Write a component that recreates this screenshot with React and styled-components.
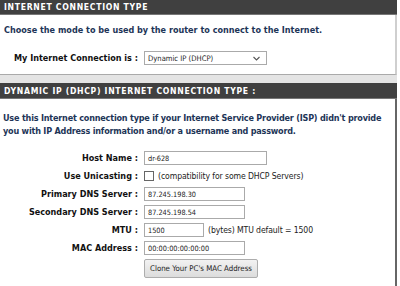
import styled, { createGlobalStyle } from "styled-components"

const Global = createGlobalStyle`
  body {
    margin: 0;
    background: #fff;
    font-family: "DejaVu Sans Condensed", "DejaVu Sans", Verdana, sans-serif;
  }
`

const Page = styled.div`
  width: 397px;
  display: flex;
  flex-direction: column;
`

const Header = styled.div`
  background: #404040;
  color: #fff;
  font-weight: bold;
  font-size: 8.6px;
  letter-spacing: 0.7px;
  height: ${p => p.h}px;
  display: flex;
  align-items: center;
  padding-left: 4px;
  border-bottom: 1px solid #777;
`

const Box = styled.div`
  background: #fff;
  border-right: 2px solid ${p => p.edge};
  border-bottom: 1px solid #aaa;
  padding: ${p => p.pad};
  display: flex;
  flex-direction: column;
`

const Gap = styled.div`
  height: 8px;
  background: #e4e4e4;
`

const Intro = styled.p`
  margin: 0;
  color: #1d3557;
  font-weight: bold;
  font-size: 9px;
  letter-spacing: ${p => p.track || 0}px;
  line-height: 13px;
  white-space: nowrap;
`

const Form = styled.div`
  display: grid;
  grid-template-columns: 134px 1fr;
  column-gap: 6px;
  row-gap: ${p => p.gap}px;
  align-items: center;
`

const Label = styled.div`
  text-align: right;
  font-weight: bold;
  font-size: 9px;
  color: #111;
  white-space: nowrap;
`

const Field = styled.div`
  display: flex;
  align-items: center;
  gap: 4px;
  min-height: 14px;
  font-size: 9px;
  color: #222;
  white-space: nowrap;
`

const Note = styled.span`
  font-size: 8.6px;
  letter-spacing: -0.1px;
`

const Input = styled.div`
  width: ${p => p.w}px;
  height: 14px;
  box-sizing: border-box;
  border: 1px solid #aaa;
  background: #fff;
  font-size: 7.3px;
  padding-left: 3px;
  display: flex;
  align-items: center;
  color: #222;
`

const Select = styled(Input)`
  justify-content: space-between;
  padding-right: 6px;
  font-size: 7.6px;
`

const Check = styled.div`
  width: 10px;
  height: 10px;
  box-sizing: border-box;
  border: 1px solid #666;
  background: #fff;
`

const Button = styled.div`
  width: 114px;
  height: 19px;
  box-sizing: border-box;
  border: 1px solid #adadad;
  border-radius: 2px;
  background: linear-gradient(#f2f2f2, #dcdcdc);
  font-size: 7.8px;
  color: #222;
  white-space: nowrap;
  display: flex;
  align-items: center;
  justify-content: center;
`

function Chevron() {
  return (
    <svg width="7" height="5" viewBox="0 0 7 5">
      <path d="M0.5 1 L3.5 4 L6.5 1" fill="none" stroke="#555" strokeWidth="1.1" />
    </svg>
  )
}

export default function App() {
  return (
    <>
      <Global />
      <Page>
        <Header h={14}>INTERNET CONNECTION TYPE</Header>
        <Box edge="#cfcfcf" pad="9px 0 9px 4px">
          <Intro>Choose the mode to be used by the router to connect to the Internet.</Intro>
          <Form gap={0} style={{ marginTop: 14 }}>
            <Label>My Internet Connection is :</Label>
            <Field>
              <Select w={123}>
                <span>Dynamic IP (DHCP)</span>
                <Chevron />
              </Select>
            </Field>
          </Form>
        </Box>
        <Gap />
        <Header h={15}>DYNAMIC IP (DHCP) INTERNET CONNECTION TYPE :</Header>
        <Box edge="#666" pad="13px 0 8px 3px">
          <Intro track={-0.2}>
            Use this Internet connection type if your Internet Service Provider (ISP) didn't provide
            <br />
            you with IP Address information and/or a username and password.
          </Intro>
          <Form gap={4} style={{ marginTop: 13, marginLeft: 1 }}>
            <Label>Host Name :</Label>
            <Field><Input w={123}>dr-628</Input></Field>
            <Label>Use Unicasting :</Label>
            <Field><Check /><Note>(compatibility for some DHCP Servers)</Note></Field>
            <Label>Primary DNS Server :</Label>
            <Field><Input w={101}>87.245.198.30</Input></Field>
            <Label>Secondary DNS Server :</Label>
            <Field><Input w={101}>87.245.198.54</Input></Field>
            <Label>MTU :</Label>
            <Field><Input w={60}>1500</Input><Note>(bytes) MTU default = 1500</Note></Field>
            <Label>MAC Address :</Label>
            <Field><Input w={101}>00:00:00:00:00:00</Input></Field>
            <div />
            <Field><Button>Clone Your PC's MAC Address</Button></Field>
          </Form>
        </Box>
      </Page>
    </>
  )
}
